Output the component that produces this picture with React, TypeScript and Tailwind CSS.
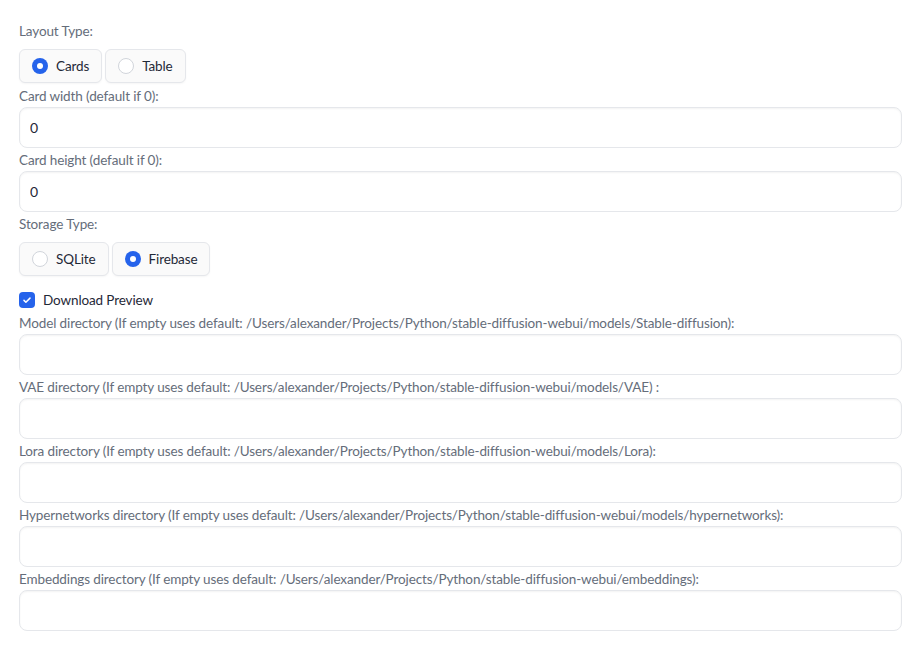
import { useState } from "react";

type Option = { label: string; value: string };

const labelCls = "block h-5 text-[13.5px] leading-5 tracking-[-0.12px] text-[#656d7a]";
const inputCls =
  "block w-full h-[41px] rounded-lg border border-[#e5e7eb] bg-white px-[10px] text-[14px] text-[#1f2937] shadow-[inset_0_1px_2px_rgba(0,0,0,0.05)] outline-none";

const RadioGroup = ({
  options,
  value,
  onChange,
}: {
  options: Option[];
  value: string;
  onChange: (v: string) => void;
}) => (
  <div className="flex gap-[3px]">
    {options.map((o) => {
      const checked = o.value === value;
      return (
        <label
          key={o.value}
          onClick={() => onChange(o.value)}
          className="flex h-[34px] cursor-pointer items-center gap-2 rounded-md border border-[#e5e7eb] bg-[#fafafa] pl-[12px] pr-[12px] text-[13.5px] tracking-[-0.12px] text-[#1f2937] shadow-[0_1px_2px_rgba(0,0,0,0.04)]"
        >
          {checked ? (
            <span className="flex h-4 w-4 items-center justify-center rounded-full bg-[#2563eb]">
              <span className="h-[6px] w-[6px] rounded-full bg-white" />
            </span>
          ) : (
            <span className="h-4 w-4 rounded-full border border-[#d1d5db] bg-white" />
          )}
          {o.label}
        </label>
      );
    })}
  </div>
);

const Field = ({ label, value = "" }: { label: string; value?: string }) => (
  <div className="mb-[2px]">
    <div className={`${labelCls} mb-px`}>{label}</div>
    <input className={inputCls} defaultValue={value} />
  </div>
);

const base = "/Users/alexander/Projects/Python/stable-diffusion-webui";

export default function App() {
  const [layout, setLayout] = useState("cards");
  const [storage, setStorage] = useState("firebase");
  const [preview, setPreview] = useState(true);

  return (
    <div
      className="min-h-[645px] w-[920px] bg-white pl-[19px] pr-[18px] pt-[21px]"
      style={{ fontFamily: '"Source Sans Pro", Lato, "Noto Sans", sans-serif' }}
    >
      <div className={labelCls}>Layout Type:</div>
      <div className="mt-2 mb-[3px]">
        <RadioGroup
          options={[
            { label: "Cards", value: "cards" },
            { label: "Table", value: "table" },
          ]}
          value={layout}
          onChange={setLayout}
        />
      </div>

      <Field label="Card width (default if 0):" value="0" />
      <Field label="Card height (default if 0):" value="0" />

      <div className={labelCls}>Storage Type:</div>
      <div className="mt-2">
        <RadioGroup
          options={[
            { label: "SQLite", value: "sqlite" },
            { label: "Firebase", value: "firebase" },
          ]}
          value={storage}
          onChange={setStorage}
        />
      </div>

      {/* checkbox */}
      <label
        className="mt-4 flex h-4 cursor-pointer items-center gap-2 text-[13.5px] tracking-[-0.12px] text-[#1f2937]"
        onClick={() => setPreview(!preview)}
      >
        <span
          className={`flex h-4 w-4 items-center justify-center rounded-[4px] ${
            preview ? "bg-[#2563eb]" : "border border-[#d1d5db] bg-white"
          }`}
        >
          {preview && (
            <svg viewBox="0 0 16 16" className="h-3 w-3" fill="none">
              <path d="M4 8.5l2.5 2.5L12 5.5" stroke="white" strokeWidth="2" strokeLinecap="round" strokeLinejoin="round" />
            </svg>
          )}
        </span>
        Download Preview
      </label>

      <div className="mt-[5px]">
        <Field label={`Model directory (If empty uses default: ${base}/models/Stable-diffusion):`} />
        <Field label={`VAE directory (If empty uses default: ${base}/models/VAE) :`} />
        <Field label={`Lora directory (If empty uses default: ${base}/models/Lora):`} />
        <Field label={`Hypernetworks directory (If empty uses default: ${base}/models/hypernetworks):`} />
        <Field label={`Embeddings directory (If empty uses default: ${base}/embeddings):`} />
      </div>
    </div>
  );
}
